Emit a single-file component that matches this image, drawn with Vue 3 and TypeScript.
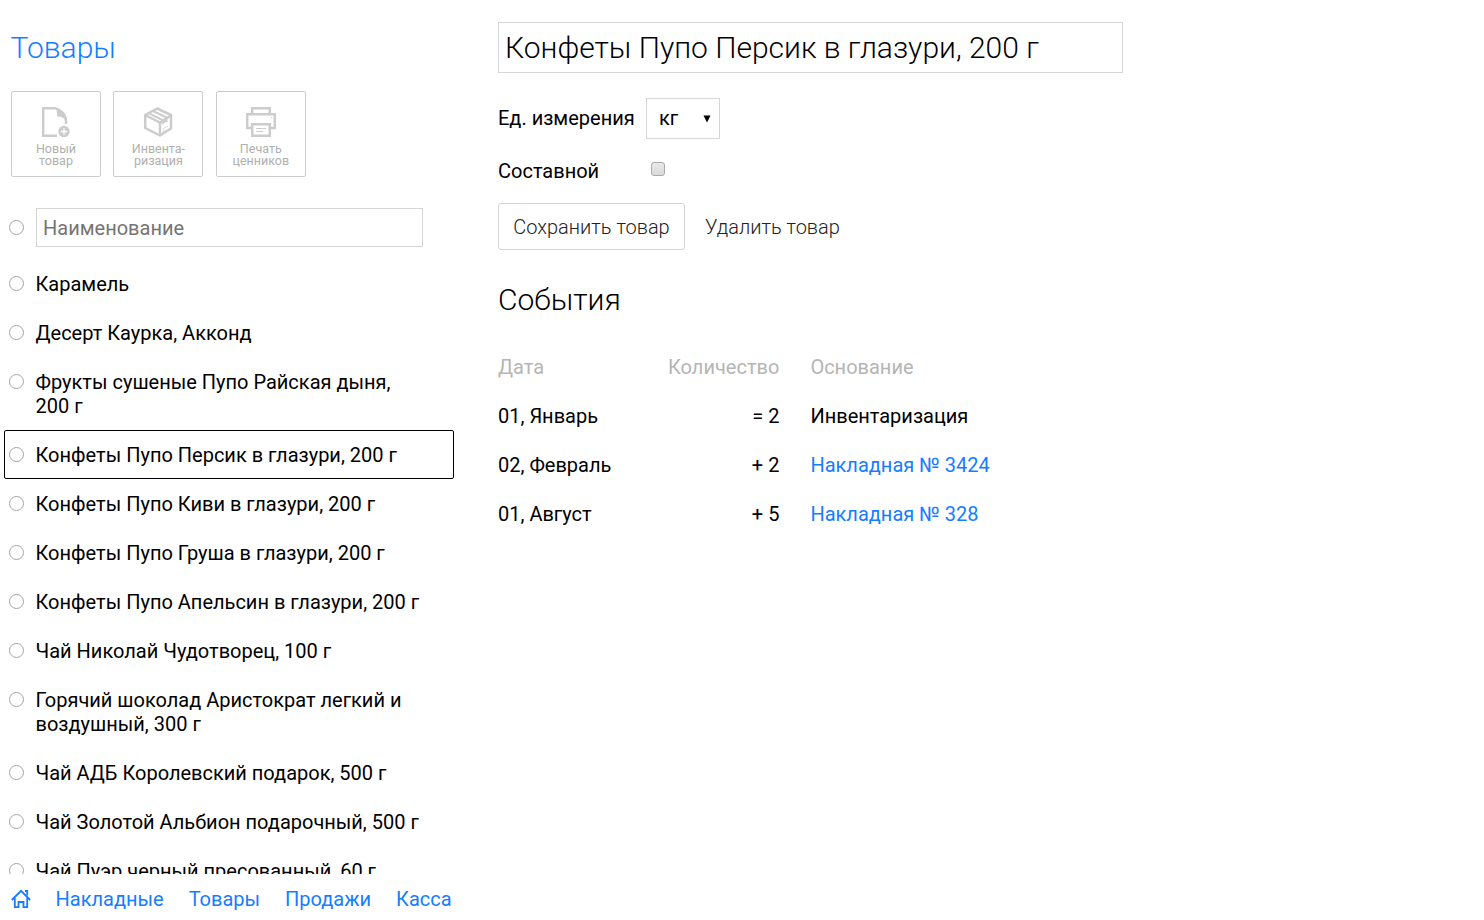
<script setup lang="ts">
import { ref } from 'vue'

interface Product { id: number; name: string }
interface StockEvent { date: string; amount: string; reason: string; link: boolean }

const names: string[] = [
  'Карамель',
  'Десерт Каурка, Акконд',
  'Фрукты сушеные Пупо Райская дыня, 200 г',
  'Конфеты Пупо Персик в глазури, 200 г',
  'Конфеты Пупо Киви в глазури, 200 г',
  'Конфеты Пупо Груша в глазури, 200 г',
  'Конфеты Пупо Апельсин в глазури, 200 г',
  'Чай Николай Чудотворец, 100 г',
  'Горячий шоколад Аристократ легкий и воздушный, 300 г',
  'Чай АДБ Королевский подарок, 500 г',
  'Чай Золотой Альбион подарочный, 500 г',
  'Чай Пуэр черный пресованный, 60 г',
]
const products: Product[] = names.map((name, id) => ({ id, name }))
const selected = ref(3)
const title = ref(names[3])
const query = ref('')

const events: StockEvent[] = [
  { date: '01, Январь', amount: '= 2', reason: 'Инвентаризация', link: false },
  { date: '02, Февраль', amount: '+ 2', reason: 'Накладная № 3424', link: true },
  { date: '01, Август', amount: '+ 5', reason: 'Накладная № 328', link: true },
]
const links: string[] = ['Накладные', 'Товары', 'Продажи', 'Касса']

function select(p: Product) {
  selected.value = p.id
  title.value = p.name
}
</script>

<template>
  <div class="page">
    <section class="side">
      <h1 class="heading blue">Товары</h1>
      <div class="tools">
        <button class="tool">
          <svg width="30" height="30" viewBox="1 0 30 30">
            <path d="M2 1.200H15C21 2.700 26 8 26 14V17M3.200 0V28.800H17" fill="none" stroke="#ccc" stroke-width="2.400" />
            <path d="M15 1C17.500 3 17 7 17 9.500C20.500 9 24 10.500 27 15C26 8 21 2 15 0Z" fill="#ccc" />
            <circle cx="24" cy="24.500" r="5.700" fill="#ccc" />
            <path d="M24 21.300V27.700M20.800 24.500H27.200" stroke="#fff" stroke-width="1.300" />
          </svg>
          <span>Новый<br>товар</span>
        </button>
        <button class="tool">
          <svg width="30" height="30" viewBox="0 0 30 30">
            <path d="M2.200 8L14 1.500L28 8V21.500L17 28.500L2.200 21Z" fill="none" stroke="#ccc" stroke-width="2.500" stroke-linejoin="round" />
            <path d="M2 8L17 15.500L28 8.500M17 15.500V28" fill="none" stroke="#ccc" stroke-width="2.400" />
            <path d="M6 6.300L20.500 13.500" fill="none" stroke="#ccc" stroke-width="2" />
            <path d="M10 4L24 10.800" fill="none" stroke="#ccc" stroke-width="2.200" />
            <path d="M19 13L24.500 10V15.500L22.500 15L19.500 18Z" fill="#ccc" />
            <path d="M19.500 22.300L25 19M19.500 24.700L22.500 22.800" stroke="#ccc" stroke-width=".8" />
          </svg>
          <span>Инвента-<br>ризация</span>
        </button>
        <button class="tool">
          <svg width="30" height="30" viewBox="0 0 30 30" fill="none" stroke="#ccc" stroke-width="2.500">
            <path d="M6.200 7V1.200H23.800V7M6 21H1.200V7.200H28.800V21H24" />
            <path d="M6.200 17.200H23.800V28.800H6.200Z" />
            <path d="M10 21.500H20M10 24.500H17" stroke-width="1" />
            <path d="M25 10.500H26.200" stroke-width="1" />
          </svg>
          <span>Печать<br>ценников</span>
        </button>
      </div>
      <div class="search">
        <i class="dot"></i>
        <input v-model="query" class="field" placeholder="Наименование">
      </div>
      <div class="list">
        <div v-for="p in products" :key="p.id" class="row" :class="{ active: p.id === selected }" @click="select(p)">
          <i class="dot"></i>
          <span class="name">{{ p.name }}</span>
        </div>
      </div>
    </section>

    <main class="main">
      <input v-model="title" class="title">
      <div class="unit">
        <span class="label">Ед. измерения</span>
        <div class="select">
          <span>кг</span>
          <svg width="8" height="8" viewBox="0 0 8 8"><path d="M.5 .5H7.500L4 7.500Z" fill="#000" /></svg>
        </div>
      </div>
      <div class="composite">
        <span class="label">Составной</span>
        <i class="check"></i>
      </div>
      <div class="actions">
        <button class="save">Сохранить товар</button>
        <button class="remove">Удалить товар</button>
      </div>
      <h2 class="heading">События</h2>
      <div class="events">
        <div class="event head"><span>Дата</span><span class="num">Количество</span><span>Основание</span></div>
        <div v-for="e in events" :key="e.reason" class="event">
          <span>{{ e.date }}</span>
          <span class="num">{{ e.amount }}</span>
          <span :class="{ blue: e.link }">{{ e.reason }}</span>
        </div>
      </div>
    </main>

    <nav class="nav">
      <svg width="20" height="20" viewBox="0 0 20 20" fill="none" stroke="#167dff" stroke-width="1.800">
        <path d="M.8 11L10 1.800L19.200 11M3.800 9V18.200H7.500V13H12.500V18.200H16.200V9" />
        <path d="M14 2H16.200V6.500" />
      </svg>
      <a v-for="l in links" :key="l">{{ l }}</a>
    </nav>
  </div>
</template>

<style>
body { margin: 0; background: #fff; }
</style>

<style scoped>
.page {
  position: relative;
  display: flex;
  box-sizing: border-box;
  width: 1484px;
  height: 920px;
  overflow: hidden;
  background: #fff;
  color: #000;
  font: 400 20px/24px Roboto, sans-serif;
}
button, input { font: inherit; color: inherit; background: none; border: 0; margin: 0; padding: 0; outline: 0; border-radius: 0; }
.blue { color: #167dff; }
.heading { margin: 0; font-size: 30px; line-height: 36px; font-weight: 300; }
.side { flex: none; width: 498px; }
.side .heading { margin: 30px 0 0 10.500px; }
.tools { display: flex; gap: 12.400px; margin: 25px 0 0 11px; }
.tool {
  display: flex;
  flex-direction: column;
  align-items: center;
  box-sizing: border-box;
  width: 90px;
  height: 86px;
  padding-top: 15px;
  border: 1px solid #ccc;
  border-radius: 2px;
  color: #b0b0b0;
  font-size: 12.500px;
  font-weight: 400;
  line-height: 12px;
}
.tool span { margin-top: 6px; }
.search { display: flex; align-items: center; margin: 31px 0 0 9px; }
.dot { flex: none; box-sizing: border-box; width: 15px; height: 15px; border: 1px solid #a5a5a5; border-radius: 50%; }
.field { box-sizing: border-box; width: 387px; height: 39px; margin-left: 12px; padding: 0 6px; border: 1px solid #d5d5d5; }
.field::placeholder { color: #757575; opacity: 1; }
.list { margin: 12px 0 0 4px; }
.row { display: flex; box-sizing: border-box; width: 450px; padding: 12px 30px 11px 4px; border: 1px solid transparent; border-radius: 2px; }
.row.active { border-color: #000; }
.row .dot { margin-top: 4px; }
.name { margin-left: 11.500px; }
.main { width: 625px; padding-top: 22px; }
.title { display: block; box-sizing: border-box; width: 625px; height: 51px; padding: 0 6px; border: 1px solid #d5d5d5; font-size: 30px; font-weight: 300; }
.unit, .composite { display: flex; align-items: center; }
.unit { margin-top: 25px; height: 41px; }
.label { width: 148px; }
.unit .label { padding-bottom: 1px; }
.select { display: flex; align-items: center; justify-content: space-between; box-sizing: border-box; width: 74px; height: 41px; padding: 0 8px 0 12px; border: 1px solid #d5d5d5; }
.select span { padding-bottom: 1px; }
.composite { height: 24px; margin-top: 20px; }
.check { box-sizing: border-box; width: 14px; height: 14px; margin: -4px 0 0 5px; border: 1px solid #aaa; border-radius: 3px; background: linear-gradient(#e8e8e8, #dadada); }
.actions { display: flex; margin-top: 20px; font-weight: 300; color: #222; }
.save { box-sizing: border-box; width: 187px; height: 47px; border: 1px solid #d5d5d5; border-radius: 3px; }
.remove { margin-left: 20px; }
.main .heading { margin-top: 32px; }
.events { margin-top: 24px; }
.event { display: grid; grid-template-columns: 150px 131.400px auto; height: 49px; align-items: center; }
.event .num { text-align: right; }
.event span:last-child { margin-left: 31px; }
.head { color: #b5b5b5; }
.nav {
  position: absolute;
  left: 0;
  bottom: 0;
  display: flex;
  align-items: center;
  box-sizing: border-box;
  width: 100%;
  height: 46px;
  padding: 4px 0 0 11px;
  background: #fff;
  color: #167dff;
}
.nav a { margin-left: 25px; }
.nav a:first-of-type { margin-left: 24.500px; }
</style>
